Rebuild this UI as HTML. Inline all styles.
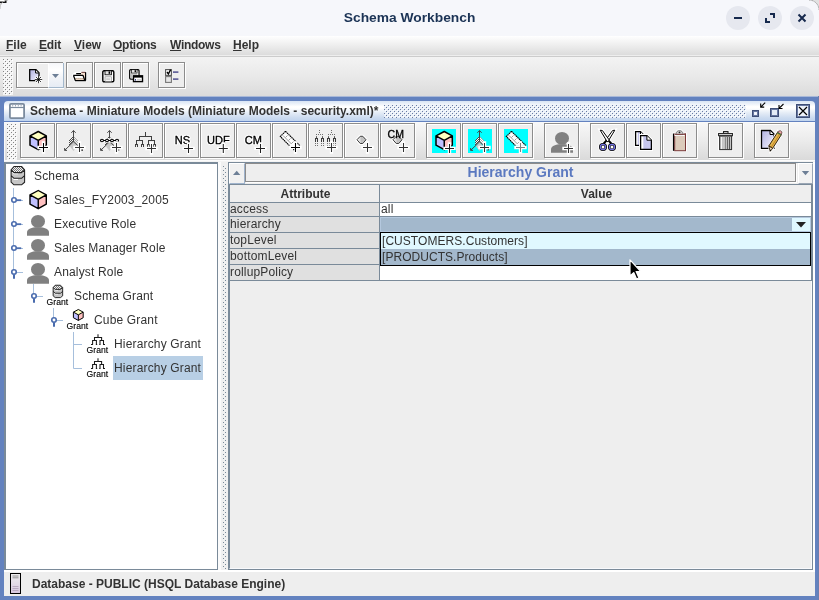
<!DOCTYPE html>
<html><head><meta charset="utf-8"><title>Schema Workbench</title>
<style>
html,body{margin:0;padding:0;}
body{will-change:transform;width:819px;height:600px;overflow:hidden;position:relative;background:#eeeeee;font-family:"Liberation Sans",sans-serif;font-size:12px;color:#333;}
div,svg,span{position:absolute;}
svg{overflow:visible;}
.t{white-space:nowrap;}
.b{font-weight:bold;}
.p{letter-spacing:0.16px;}
#titlebar{left:0;top:0;width:819px;height:36px;background:#f6f7fb;}
#title{left:0;top:0;width:819px;height:36px;line-height:36px;text-align:center;font-weight:bold;font-size:11.9px;color:#1b3355;transform:scaleX(1.16);transform-origin:409px 50%;}
.wbtn{width:24px;height:24px;border-radius:12px;background:#e6e8ef;top:6px;}
#menubar{left:0;top:36px;width:819px;height:20px;background:linear-gradient(#ffffff,#dcdcdc 95%,#eeeeee 95%);border-bottom:1px solid #cccccc;}
.menu{top:36px;height:20px;line-height:19px;font-weight:bold;font-size:12px;color:#333;}
.tbtn{box-sizing:border-box;border:1px solid #8c8c8c;background:#eeeeee;box-shadow:inset 1px 1px 0 #fff,1px 1px 0 #fff;}
</style></head><body>

<div id="titlebar"></div>
<svg style="left:0;top:0" width="819" height="12"><path d="M0 0H8A8 8 0 0 0 0 9Z" fill="#dcdcdc"/><path d="M0 0H5V2H0Z" fill="#fff"/><path d="M0 2.3H5.8V0" fill="none" stroke="#111" stroke-width="1.4"/><path d="M8 0A8 8 0 0 0 0 9" fill="none" stroke="#b0b0b0" stroke-width="0.8"/><path d="M819 0H809A10 10 0 0 1 819 10Z" fill="#e2e2e2"/><path d="M809 0A10 10 0 0 1 819 10" fill="none" stroke="#8a8a8a" stroke-width="0.9" stroke-dasharray="1 0.6"/></svg>
<div id="title">Schema Workbench</div>
<div class="wbtn" style="left:726px"></div>
<div class="wbtn" style="left:758px"></div>
<div class="wbtn" style="left:790px"></div>
<svg style="left:726px;top:6px" width="24" height="24"><path d="M8 12H16" stroke="#16294d" stroke-width="2"/></svg>
<svg style="left:758px;top:6px" width="24" height="24"><path d="M12 8H16V12M8 12V16H12" stroke="#16294d" stroke-width="2" fill="none"/></svg>
<svg style="left:790px;top:6px" width="24" height="24"><path d="M8.5 8.5L15.5 15.5M15.5 8.5L8.5 15.5" stroke="#16294d" stroke-width="2" fill="none"/></svg>
<div id="menubar"></div>
<div class="menu t" style="left:6px;letter-spacing:0px"><u>F</u>ile</div>
<div class="menu t" style="left:39px;letter-spacing:-0.18px"><u>E</u>dit</div>
<div class="menu t" style="left:74px;letter-spacing:0px"><u>V</u>iew</div>
<div class="menu t" style="left:113px;letter-spacing:-0.27px"><u>O</u>ptions</div>
<div class="menu t" style="left:170px;letter-spacing:-0.29px"><u>W</u>indows</div>
<div class="menu t" style="left:233px;letter-spacing:0px"><u>H</u>elp</div>
<div style="left:0;top:57px;width:819px;height:39px;background:linear-gradient(#f3f3f3,#e9e9e9 50%,#dbdbdb)"></div>
<svg style="left:3px;top:59px" width="10" height="36" shape-rendering="crispEdges"><defs><pattern id="bp3_59" width="4" height="4" patternUnits="userSpaceOnUse"><rect width="4" height="4" fill="#f3f3f3"/><rect x="0" y="0" width="1" height="1" fill="#858585"/><rect x="2" y="2" width="1" height="1" fill="#858585"/><rect x="1" y="1" width="1" height="1" fill="#ffffff"/><rect x="3" y="3" width="1" height="1" fill="#ffffff"/></pattern></defs><rect width="10" height="36" fill="url(#bp3_59)"/></svg>
<div class="tbtn" style="left:16px;top:62px;width:47px;height:26px"></div>
<div class="tbtn" style="left:66px;top:62px;width:27px;height:26px"></div>
<div class="tbtn" style="left:94px;top:62px;width:27px;height:26px"></div>
<div class="tbtn" style="left:122px;top:62px;width:27px;height:26px"></div>
<div class="tbtn" style="left:158px;top:62px;width:27px;height:26px"></div>
<div style="left:0;top:96px;width:819px;height:504px;background:#6382bf"></div>
<div style="left:0;top:96px;width:819px;height:1px;background:#a8b8d8"></div>
<div style="left:818px;top:96px;width:1px;height:504px;background:#6a7fae"></div>
<div style="left:4px;top:101px;width:811px;height:20px;border-radius:4px 4px 0 0;background:linear-gradient(#d8e4f4 0%,#ffffff 28%,#ffffff 35%,#e4ecf6 60%,#cddcf0 83%,#c0d4ee 100%)"></div>
<div class="t b" style="left:30px;top:101px;height:20px;line-height:20px;font-size:12px;color:#333">Schema - Miniature Models (Miniature Models - security.xml)*</div>
<div style="left:4px;top:122px;width:811px;height:474px;background:#eeeeee"></div>
<div style="left:4px;top:122px;width:811px;height:38px;background:linear-gradient(#f8f8f8,#ebebeb 50%,#dadada)"></div>
<div style="left:4px;top:122px;width:811px;height:1px;background:#fafafa"></div>
<div style="left:4px;top:122px;width:1px;height:40px;background:#fafafa"></div>
<div style="left:4px;top:160px;width:811px;height:1px;background:#fcfcfc"></div>
<div style="left:4px;top:161px;width:811px;height:1px;background:#f4f4f4"></div>
<div style="left:4px;top:162px;width:1px;height:408px;background:#7a8a99"></div>
<svg style="left:7px;top:124px" width="10" height="36" shape-rendering="crispEdges"><defs><pattern id="bp7_124" width="4" height="4" patternUnits="userSpaceOnUse"><rect width="4" height="4" fill="#f5f5f5"/><rect x="0" y="0" width="1" height="1" fill="#858585"/><rect x="2" y="2" width="1" height="1" fill="#858585"/><rect x="1" y="1" width="1" height="1" fill="#ffffff"/><rect x="3" y="3" width="1" height="1" fill="#ffffff"/></pattern></defs><rect width="10" height="36" fill="url(#bp7_124)"/></svg>
<div class="tbtn" style="left:20px;top:123px;width:35px;height:35px"></div>
<div class="tbtn" style="left:56px;top:123px;width:35px;height:35px"></div>
<div class="tbtn" style="left:92px;top:123px;width:35px;height:35px"></div>
<div class="tbtn" style="left:128px;top:123px;width:35px;height:35px"></div>
<div class="tbtn" style="left:164px;top:123px;width:35px;height:35px"></div>
<div class="tbtn" style="left:200px;top:123px;width:35px;height:35px"></div>
<div class="tbtn" style="left:236px;top:123px;width:35px;height:35px"></div>
<div class="tbtn" style="left:272px;top:123px;width:35px;height:35px"></div>
<div class="tbtn" style="left:308px;top:123px;width:35px;height:35px"></div>
<div class="tbtn" style="left:344px;top:123px;width:35px;height:35px"></div>
<div class="tbtn" style="left:380px;top:123px;width:35px;height:35px"></div>
<div class="tbtn" style="left:426px;top:123px;width:35px;height:35px"></div>
<div class="tbtn" style="left:462px;top:123px;width:35px;height:35px"></div>
<div class="tbtn" style="left:498px;top:123px;width:35px;height:35px"></div>
<div class="tbtn" style="left:544px;top:123px;width:35px;height:35px"></div>
<div class="tbtn" style="left:590px;top:123px;width:35px;height:35px"></div>
<div class="tbtn" style="left:626px;top:123px;width:35px;height:35px"></div>
<div class="tbtn" style="left:662px;top:123px;width:35px;height:35px"></div>
<div class="tbtn" style="left:708px;top:123px;width:35px;height:35px"></div>
<div class="tbtn" style="left:754px;top:123px;width:35px;height:35px"></div>
<div style="left:5px;top:162px;width:213px;height:408px;box-sizing:border-box;border:1px solid #7a8a99;border-top-width:2px;background:#fff"></div>
<div style="left:218px;top:162px;width:10px;height:408px;background:linear-gradient(90deg,#fbfbfb 3px,#f0f0f0 3px)"></div>
<div style="left:228px;top:162px;width:585px;height:408px;box-sizing:border-box;border:1px solid #7a8a99;background:#eeeeee"></div>
<div style="left:4px;top:570px;width:811px;height:2px;background:#fff"></div>
<div style="left:813px;top:162px;width:2px;height:410px;background:#fff"></div>
<div class="t b" style="left:32px;top:572px;height:24px;line-height:25px;font-size:12px;color:#333">Database - PUBLIC (HSQL Database Engine)</div>
<svg width="0" height="0" style="left:0;top:0"><defs><pattern id="hx1" width="2" height="2" patternUnits="userSpaceOnUse"><rect width="1" height="1" fill="#4a4a4a"/><rect x="1" y="1" width="1" height="1" fill="#4a4a4a"/></pattern><pattern id="hx2" width="2" height="2" patternUnits="userSpaceOnUse"><rect width="1" height="1" fill="#a8a8a8"/><rect x="1" y="1" width="1" height="1" fill="#a8a8a8"/></pattern></defs></svg>
<svg width="0" height="0" style="left:0;top:0"><defs><linearGradient id="hexg" x1="0" x2="1" y1="0" y2="0"><stop offset="0.15" stop-color="#f4f4f4"/><stop offset="0.5" stop-color="#c0c0c0"/><stop offset="1" stop-color="#c8c8c8"/></linearGradient><linearGradient id="docg" x1="0" x2="1" y1="0" y2="1"><stop offset="0" stop-color="#b0b0e0"/><stop offset="1" stop-color="#f4f4ff"/></linearGradient><linearGradient id="docg2" x1="0" x2="1" y1="0" y2="0"><stop offset="0" stop-color="#ffffff"/><stop offset="0.2" stop-color="#ffffff"/><stop offset="0.3" stop-color="#c4c4ec"/><stop offset="1" stop-color="#cacaf0"/></linearGradient></defs></svg>
<svg style="left:26px;top:129px" width="24" height="24" viewBox="0 0 24 24" ><path d="M12.25 2.50L20.30 6.90L12.25 11.40L4.00 6.90Z" fill="#ffffc0"/><path d="M4.00 6.90L12.25 11.40L12.25 20.70L4.00 16.20Z" fill="#c0c0ff"/><path d="M20.30 6.90L12.25 11.40L12.25 20.70L20.30 16.20Z" fill="#ffc0c0"/><path d="M12.25 2.50L20.30 6.90L20.30 16.20L12.25 20.70L4.00 16.20L4.00 6.90ZM4.00 6.90L12.25 11.40L20.30 6.90M12.25 11.40L12.25 20.70" fill="none" stroke="#000" stroke-width="1.5" stroke-linejoin="round"/><path d="M13.0 18.5H22.0M17.5 14.0V23.0" stroke="#fff" stroke-width="3.4" stroke-linecap="square" fill="none"/><path d="M13.0 18.5H22.0M17.5 14.0V23.0" stroke="#000" stroke-width="1.05" fill="none"/></svg>
<svg style="left:62px;top:129px" width="24" height="24" viewBox="0 0 24 24" ><path d="M11.5 6.5L7 11V17.5L11.5 13Z" fill="url(#hx1)"/><path d="M11.5 6.5L16 11V17L11.5 13Z" fill="url(#hx2)"/><path d="M11.5 13L8 17.5L11.5 22L15 17.5Z" fill="#c8c8c8"/><path d="M11.5 1.5V12.8M9.3 3.8L11.5 1.6L13.7 3.8M11.5 12.8L2.8 21.2M2.6 19V21.4H5M11.5 12.8L16 17" fill="none" stroke="#404040" stroke-width="0.95"/><path d="M13.0 18.5H22.0M17.5 14.0V23.0" stroke="#fff" stroke-width="3.4" stroke-linecap="square" fill="none"/><path d="M13.0 18.5H22.0M17.5 14.0V23.0" stroke="#333" stroke-width="1.05" fill="none"/><rect x="19.4" y="20.4" width="1.5" height="1.5" fill="#333"/></svg>
<svg style="left:98px;top:129px" width="24" height="24" viewBox="0 0 24 24" ><path d="M11.5 6.5L7 11V17.5L11.5 13Z" fill="url(#hx1)"/><path d="M11.5 6.5L16 11V17L11.5 13Z" fill="url(#hx2)"/><path d="M11.5 13L8 17.5L11.5 22L15 17.5Z" fill="#c8c8c8"/><path d="M11.5 1.5V12.8M9.3 3.8L11.5 1.6L13.7 3.8M11.5 12.8L2.8 21.2M2.6 19V21.4H5M11.5 12.8L16 17" fill="none" stroke="#404040" stroke-width="0.95"/><path d="M3 11.5H20" stroke="#fff" stroke-width="4.2"/><path d="M4 11.5H19" stroke="#000" stroke-width="1"/><ellipse cx="4" cy="11.5" rx="1.5" ry="1.2" fill="#fff" stroke="#000" stroke-width="1.1"/><ellipse cx="9" cy="11.5" rx="1.5" ry="1.2" fill="#fff" stroke="#000" stroke-width="1.1"/><ellipse cx="14" cy="11.5" rx="1.5" ry="1.2" fill="#fff" stroke="#000" stroke-width="1.1"/><ellipse cx="19" cy="11.5" rx="1.5" ry="1.2" fill="#fff" stroke="#000" stroke-width="1.1"/><path d="M14.0 18.5H23.0M18.5 14.0V23.0" stroke="#fff" stroke-width="3.4" stroke-linecap="square" fill="none"/><path d="M14.0 18.5H23.0M18.5 14.0V23.0" stroke="#333" stroke-width="1.05" fill="none"/><rect x="20.3" y="20.3" width="1" height="1.4" fill="#555"/></svg>
<svg style="left:134px;top:129px" width="24" height="24" viewBox="0 0 24 24" ><path d="M11.5 3V7.5M5.5 11.5V7.5H17.5V11.5M2.5 15V11.5H8.5V15M14.5 15V11.5H20.5V15M1.5 18V15.5H3.5V18M7.5 18V15.5H9.5V18M13.5 18V15.5H15.5V18M19.5 18V15.5H21.5V18" fill="none" stroke="#404040" stroke-width="1" shape-rendering="crispEdges"/><path d="M13.0 19.5H22.0M17.5 15.0V24.0" stroke="#fff" stroke-width="3.4" stroke-linecap="square" fill="none"/><path d="M13.0 19.5H22.0M17.5 15.0V24.0" stroke="#333" stroke-width="1.05" fill="none"/></svg>
<svg style="left:170px;top:129px" width="24" height="24" viewBox="0 0 24 24" ><text x="4.7" y="15.3" font-family="Liberation Sans, sans-serif" font-size="11" font-weight="normal" fill="#fff" stroke="#fff" stroke-width="2.4" stroke-linejoin="round">NS</text><text x="4.7" y="15.3" font-family="Liberation Sans, sans-serif" font-size="11" font-weight="normal" fill="#000" stroke="#000" stroke-width="0.35">NS</text><path d="M14.0 19.4H23.0M18.5 14.899999999999999V23.9" stroke="#fff" stroke-width="3.4" stroke-linecap="square" fill="none"/><path d="M14.0 19.4H23.0M18.5 14.899999999999999V23.9" stroke="#222" stroke-width="1.05" fill="none"/></svg>
<svg style="left:206px;top:129px" width="24" height="24" viewBox="0 0 24 24" ><text x="1" y="15.4" font-family="Liberation Sans, sans-serif" font-size="11" font-weight="normal" fill="#fff" stroke="#fff" stroke-width="2.4" stroke-linejoin="round">UDF</text><text x="1" y="15.4" font-family="Liberation Sans, sans-serif" font-size="11" font-weight="normal" fill="#000" stroke="#000" stroke-width="0.35">UDF</text><path d="M12.8 19.4H21.8M17.3 14.899999999999999V23.9" stroke="#fff" stroke-width="3.4" stroke-linecap="square" fill="none"/><path d="M12.8 19.4H21.8M17.3 14.899999999999999V23.9" stroke="#222" stroke-width="1.05" fill="none"/></svg>
<svg style="left:242px;top:129px" width="24" height="24" viewBox="0 0 24 24" ><text x="2.7" y="15.4" font-family="Liberation Sans, sans-serif" font-size="11" font-weight="normal" fill="#fff" stroke="#fff" stroke-width="2.4" stroke-linejoin="round">CM</text><text x="2.7" y="15.4" font-family="Liberation Sans, sans-serif" font-size="11" font-weight="normal" fill="#000" stroke="#000" stroke-width="0.35">CM</text><path d="M14.0 19.4H23.0M18.5 14.899999999999999V23.9" stroke="#fff" stroke-width="3.4" stroke-linecap="square" fill="none"/><path d="M14.0 19.4H23.0M18.5 14.899999999999999V23.9" stroke="#222" stroke-width="1.05" fill="none"/></svg>
<svg style="left:278px;top:129px" width="24" height="24" viewBox="0 0 24 24" ><path d="M7.5 2.3L2.3 7.4L11.6 16.7L16 12.5L21.7 17" fill="none"/><path d="M7.5 2.3L2.3 7.5L11.5 16.7L21.9 16.7Z" fill="#fff"/><path d="M7.5 2.3L2.3 7.5L11.5 16.7M7.5 2.3L21.8 16.6" fill="none" stroke="#000" stroke-width="1.1" stroke-dasharray="1.6 0.5"/><path d="M5 6.5L13.5 15M7.5 8.5L9.5 6.5M10.5 11.5L12.5 9.5M13.5 14.5L15.5 12.5" fill="none" stroke="#909090" stroke-width="0.9"/><path d="M13.0 18.5H22.0M17.5 14.0V23.0" stroke="#fff" stroke-width="3.4" stroke-linecap="square" fill="none"/><path d="M13.0 18.5H22.0M17.5 14.0V23.0" stroke="#000" stroke-width="1.05" fill="none"/><rect x="15" y="20" width="1.2" height="1.2" fill="#222"/></svg>
<svg style="left:314px;top:129px" width="24" height="24" viewBox="0 0 24 24" ><g shape-rendering="crispEdges"><rect x="5" y="1" width="1" height="1" fill="#707070"/><rect x="5" y="3" width="1" height="1" fill="#707070"/><rect x="2" y="5" width="1" height="1" fill="#707070"/><rect x="4" y="5" width="1" height="1" fill="#707070"/><rect x="6" y="5" width="1" height="1" fill="#707070"/><rect x="8" y="5" width="1" height="1" fill="#707070"/><rect x="2" y="7" width="1" height="1" fill="#707070"/><rect x="8" y="7" width="1" height="1" fill="#707070"/><rect x="2" y="8" width="1" height="1" fill="#555"/><rect x="1" y="9" width="3" height="1" fill="#3a3a3a"/><rect x="1" y="10" width="1" height="3" fill="#3a3a3a"/><rect x="3" y="10" width="1" height="3" fill="#3a3a3a"/><rect x="1" y="14" width="1" height="1" fill="#707070"/><rect x="3" y="14" width="1" height="1" fill="#707070"/><rect x="1" y="16" width="1" height="1" fill="#707070"/><rect x="3" y="16" width="1" height="1" fill="#707070"/><rect x="8" y="8" width="1" height="1" fill="#555"/><rect x="7" y="9" width="3" height="1" fill="#3a3a3a"/><rect x="7" y="10" width="1" height="3" fill="#3a3a3a"/><rect x="9" y="10" width="1" height="3" fill="#3a3a3a"/><rect x="7" y="14" width="1" height="1" fill="#707070"/><rect x="9" y="14" width="1" height="1" fill="#707070"/><rect x="7" y="16" width="1" height="1" fill="#707070"/><rect x="9" y="16" width="1" height="1" fill="#707070"/><rect x="17" y="1" width="1" height="1" fill="#707070"/><rect x="17" y="3" width="1" height="1" fill="#707070"/><rect x="14" y="5" width="1" height="1" fill="#707070"/><rect x="16" y="5" width="1" height="1" fill="#707070"/><rect x="18" y="5" width="1" height="1" fill="#707070"/><rect x="20" y="5" width="1" height="1" fill="#707070"/><rect x="14" y="7" width="1" height="1" fill="#707070"/><rect x="20" y="7" width="1" height="1" fill="#707070"/><rect x="14" y="8" width="1" height="1" fill="#555"/><rect x="13" y="9" width="3" height="1" fill="#3a3a3a"/><rect x="13" y="10" width="1" height="3" fill="#3a3a3a"/><rect x="15" y="10" width="1" height="3" fill="#3a3a3a"/><rect x="13" y="14" width="1" height="1" fill="#707070"/><rect x="15" y="14" width="1" height="1" fill="#707070"/><rect x="13" y="16" width="1" height="1" fill="#707070"/><rect x="15" y="16" width="1" height="1" fill="#707070"/><rect x="20" y="8" width="1" height="1" fill="#555"/><rect x="19" y="9" width="3" height="1" fill="#3a3a3a"/><rect x="19" y="10" width="1" height="3" fill="#3a3a3a"/><rect x="21" y="10" width="1" height="3" fill="#3a3a3a"/><rect x="19" y="14" width="1" height="1" fill="#707070"/><rect x="21" y="14" width="1" height="1" fill="#707070"/><rect x="19" y="16" width="1" height="1" fill="#707070"/><rect x="21" y="16" width="1" height="1" fill="#707070"/></g><path d="M13.0 18.5H22.0M17.5 14.0V23.0" stroke="#fff" stroke-width="3.4" stroke-linecap="square" fill="none"/><path d="M13.0 18.5H22.0M17.5 14.0V23.0" stroke="#333" stroke-width="1.05" fill="none"/></svg>
<svg style="left:350px;top:129px" width="24" height="24" viewBox="0 0 24 24" ><path d="M7 10.75L10.25 7.25L12.75 7.25L16 10.75L12.75 14.5L10.25 14.5Z" fill="none" stroke="#fff" stroke-width="3.2" stroke-linejoin="round"/><path d="M7 10.75L10.25 7.25L12.75 7.25L16 10.75L12.75 14.5L10.25 14.5Z" fill="url(#hexg)" stroke="#333" stroke-width="0.95" stroke-linejoin="round"/><path d="M13.0 18.5H22.0M17.5 14.0V23.0" stroke="#fff" stroke-width="3.4" stroke-linecap="square" fill="none"/><path d="M13.0 18.5H22.0M17.5 14.0V23.0" stroke="#333" stroke-width="1.05" fill="none"/></svg>
<svg style="left:386px;top:129px" width="24" height="24" viewBox="0 0 24 24" ><path d="M7 10.75L10.25 7.25L12.75 7.25L16 10.75L12.75 14.5L10.25 14.5Z" fill="none" stroke="#fff" stroke-width="3.2" stroke-linejoin="round"/><path d="M7 10.75L10.25 7.25L12.75 7.25L16 10.75L12.75 14.5L10.25 14.5Z" fill="url(#hexg)" stroke="#333" stroke-width="0.95" stroke-linejoin="round"/><text x="1.6" y="8.7" font-family="Liberation Sans, sans-serif" font-size="10.5" font-weight="normal" fill="#000" stroke="#000" stroke-width="0.3">CM</text><path d="M13.0 18.5H22.0M17.5 14.0V23.0" stroke="#fff" stroke-width="3.4" stroke-linecap="square" fill="none"/><path d="M13.0 18.5H22.0M17.5 14.0V23.0" stroke="#333" stroke-width="1.05" fill="none"/></svg>
<svg style="left:432px;top:129px" width="24" height="24" viewBox="0 0 24 24" ><rect x="-0.5" y="-0.5" width="25" height="25" fill="#ffe6e6"/><rect width="24" height="24" fill="#00ffff"/><path d="M12.25 2.50L20.30 6.90L12.25 11.40L4.00 6.90Z" fill="#ffffc0"/><path d="M4.00 6.90L12.25 11.40L12.25 20.70L4.00 16.20Z" fill="#c0c0ff"/><path d="M20.30 6.90L12.25 11.40L12.25 20.70L20.30 16.20Z" fill="#ffc0c0"/><path d="M12.25 2.50L20.30 6.90L20.30 16.20L12.25 20.70L4.00 16.20L4.00 6.90ZM4.00 6.90L12.25 11.40L20.30 6.90M12.25 11.40L12.25 20.70" fill="none" stroke="#000" stroke-width="1.5" stroke-linejoin="round"/><path d="M13.0 19.4H22.0M17.5 14.899999999999999V23.9" stroke="#fff" stroke-width="3.4" stroke-linecap="square" fill="none"/><path d="M13.0 19.4H22.0M17.5 14.899999999999999V23.9" stroke="#222" stroke-width="1.05" fill="none"/></svg>
<svg style="left:468px;top:129px" width="24" height="24" viewBox="0 0 24 24" ><rect x="-0.5" y="-0.5" width="25" height="25" fill="#ffe6e6"/><rect width="24" height="24" fill="#00ffff"/><path d="M11.5 7.5L7.5 11.5V17L11.5 13L15.5 16.5V11.5Z" fill="#fff"/><path d="M11.5 6.5L7 11V17.5L11.5 13Z" fill="url(#hx1)"/><path d="M11.5 6.5L16 11V17L11.5 13Z" fill="url(#hx2)"/><path d="M11.5 13L8 17.5L11.5 22L15 17.5Z" fill="#c8c8c8"/><path d="M11.5 1.5V12.8M9.3 3.8L11.5 1.6L13.7 3.8M11.5 12.8L2.8 21.2M2.6 19V21.4H5M11.5 12.8L15 16" fill="none" stroke="#404040" stroke-width="0.95"/><path d="M12.0 18.5H21.0M16.5 14.0V23.0" stroke="#fff" stroke-width="3.4" stroke-linecap="square" fill="none"/><path d="M12.0 18.5H21.0M16.5 14.0V23.0" stroke="#333" stroke-width="1.05" fill="none"/><path d="M18.5 21.5L21 19.5V21.5Z" fill="#8a5050"/></svg>
<svg style="left:504px;top:129px" width="24" height="24" viewBox="0 0 24 24" ><rect x="-0.5" y="-0.5" width="25" height="25" fill="#ffe6e6"/><rect width="24" height="24" fill="#00ffff"/><path d="M7.5 2.3L2.3 7.4L11.6 16.7L16 12.5L21.7 17" fill="none"/><path d="M7.5 2.3L2.3 7.5L11.5 16.7L21.9 16.7Z" fill="#fff"/><path d="M7.5 2.3L2.3 7.5L11.5 16.7M7.5 2.3L21.8 16.6" fill="none" stroke="#000" stroke-width="1.1" stroke-dasharray="1.6 0.5"/><path d="M5 6.5L13.5 15M7.5 8.5L9.5 6.5M10.5 11.5L12.5 9.5M13.5 14.5L15.5 12.5" fill="none" stroke="#909090" stroke-width="0.9"/><path d="M12.0 18.5H21.0M16.5 14.0V23.0" stroke="#fff" stroke-width="3.4" stroke-linecap="square" fill="none"/><path d="M12.0 18.5H21.0M16.5 14.0V23.0" stroke="#808080" stroke-width="1.05" fill="none"/></svg>
<svg style="left:550px;top:129px" width="24" height="24" viewBox="0 0 24 24" ><ellipse cx="12" cy="9.4" rx="7" ry="6.4" fill="#808080"/><path d="M1 23.8V20.5C1 17.5 4 16.2 9 15.3H15C20 16.2 23 17.5 23 20.5V23.8Z" fill="#808080"/><path d="M14.0 19.5H23.0M18.5 15.0V24.0" stroke="#fff" stroke-width="3.4" stroke-linecap="square" fill="none"/><path d="M14.0 19.5H23.0M18.5 15.0V24.0" stroke="#333" stroke-width="1.05" fill="none"/></svg>
<svg style="left:596px;top:129px" width="24" height="24" viewBox="0 0 24 24" ><path d="M4.2 1.2L6.4 1.5L13.4 11.2L11.2 12.8Z" fill="#fff" stroke="#fff" stroke-width="3"/><path d="M18.8 1.2L16.6 1.5L9.6 11.2L11.8 12.8Z" fill="#fff" stroke="#fff" stroke-width="3"/><circle cx="7" cy="18" r="4.9" fill="#fff"/><circle cx="16" cy="18" r="4.9" fill="#fff"/><path d="M12.6 11.6L15.4 14.6M10.4 11.6L7.6 14.6" stroke="#000" stroke-width="2.1"/><path d="M18.8 1.2L16.6 1.5L9.6 11.2L11.8 12.8Z" fill="#fff" stroke="#000" stroke-width="1" stroke-linejoin="round"/><path d="M4.2 1.2L6.4 1.5L13.4 11.2L11.2 12.8Z" fill="#fff" stroke="#000" stroke-width="1" stroke-linejoin="round"/><circle cx="7" cy="18" r="4" fill="#000"/><circle cx="7" cy="18" r="3.2" fill="#7474e6"/><circle cx="7" cy="18" r="2.1" fill="#000"/><circle cx="7" cy="18" r="1.5" fill="#fff"/><circle cx="16" cy="18" r="4" fill="#000"/><circle cx="16" cy="18" r="3.2" fill="#7474e6"/><circle cx="16" cy="18" r="2.1" fill="#000"/><circle cx="16" cy="18" r="1.5" fill="#fff"/></svg>
<svg style="left:632px;top:129px" width="24" height="24" viewBox="0 0 24 24" ><path d="M3.6 2.7H8.5L12 6.2V16.3H3.6Z" fill="#fff" stroke="#fff" stroke-width="3.2"/><path d="M3.6 2.7H8.5L12 6.2V16.3H3.6Z" fill="url(#docg2)" stroke="#000" stroke-width="1.3"/><path d="M8.5 2.7V6.2H12" fill="#fff" stroke="#000" stroke-width="1"/><path d="M8.6 6.7H14.899999999999999L19.4 11.2V20.3H8.6Z" fill="#fff" stroke="#fff" stroke-width="3.2"/><path d="M8.6 6.7H14.899999999999999L19.4 11.2V20.3H8.6Z" fill="url(#docg2)" stroke="#000" stroke-width="1.3"/><path d="M14.899999999999999 6.7V11.2H19.4" fill="#fff" stroke="#000" stroke-width="1"/></svg>
<svg style="left:668px;top:129px" width="24" height="24" viewBox="0 0 24 24" ><rect x="4.3" y="3.5" width="14.6" height="19" fill="#fff"/><rect x="6.7" y="4.8" width="10.8" height="16.9" fill="#dccbbb" stroke="#7a3838" stroke-width="1"/><path d="M5.5 4.5V21.8" stroke="#000" stroke-width="1.2"/><path d="M7.8 5.6C7.8 0.2 15.2 0.2 15.2 5.6Z" fill="#c8c8c8" stroke="#fff" stroke-width="2.6"/><path d="M7.8 5.6C7.8 0.2 15.2 0.2 15.2 5.6Z" fill="#d0d0d0" stroke="#666" stroke-width="0.8"/><circle cx="11.5" cy="3.3" r="0.9" fill="#222"/><path d="M6.7 5.3H17.5" stroke="#7a3838" stroke-width="1"/></svg>
<svg style="left:714px;top:129px" width="24" height="24" viewBox="0 0 24 24" ><path d="M9.5 2.5H14V4.5H18.5V6.7H17.6V20.6H5.6V6.7H4.5V4.5H9.5Z" fill="#fff" stroke="#fff" stroke-width="3" stroke-linejoin="round"/><rect x="9.5" y="2.5" width="4.5" height="2" fill="#ddd" stroke="#222" stroke-width="1.1"/><rect x="4.5" y="4.5" width="14" height="2.2" fill="#d8d8d8" stroke="#2a2a2a" stroke-width="1.1"/><rect x="5.6" y="7" width="12" height="13.6" fill="#c4c4c4" stroke="#333" stroke-width="1.1"/><rect x="7.0" y="8" width="1" height="12" fill="#f4f4f4"/><rect x="9.0" y="8" width="1" height="12" fill="#c8c8c8"/><rect x="11.0" y="8" width="1" height="12" fill="#8a8a8a"/><rect x="13.0" y="8" width="1" height="12" fill="#666"/><rect x="15.0" y="8" width="1" height="12" fill="#555"/></svg>
<svg style="left:760px;top:129px" width="24" height="24" viewBox="0 0 24 24" ><path d="M1.5 1.5H10.5L14 5V19.3H1.5Z" fill="#fff" stroke="#fff" stroke-width="3"/><path d="M1.5 1.5H10.5L14 5V19.3H1.5Z" fill="url(#docg)" stroke="#000" stroke-width="1.3"/><path d="M10 2V5.5H13.5" fill="#fff" stroke="#000" stroke-width="1"/><path d="M18 2L22 4.5L12.5 19.5L10.2 22.3L9.2 17.2Z" fill="#fff" stroke="#fff" stroke-width="2.4"/><path d="M17.6 3.2L21.4 5.6L12.6 19.4L8.8 17Z" fill="#e4b850" stroke="#201000" stroke-width="0.9"/><path d="M17.6 3.2L18.4 2.2Q20.5 0.8 22 3.2L21.4 5.6Z" fill="#f0a8a8" stroke="#503030" stroke-width="0.8"/><path d="M16.9 4.3L20.7 6.7L21.4 5.6L17.6 3.2Z" fill="#4a7a3a"/><path d="M8.8 17L12.6 19.4L10.2 22.3Z" fill="#f4e0c0" stroke="#201000" stroke-width="0.8"/><path d="M10.2 22.3L9.9 20.4L11.3 21.2Z" fill="#000"/><path d="M19.6 5.2L11 18.4" stroke="#c08020" stroke-width="0.9"/></svg>
<div style="left:48px;top:63px;width:16px;height:25px;background:linear-gradient(#f6f7fa,#ffffff 30%,#f2f4f8 60%,#e6ecf4);border-left:1px solid #fff;border-right:1px solid #a3b8cc;border-bottom:1px solid #a3b8cc;box-sizing:border-box"></div>
<svg style="left:49px;top:62px" width="15" height="27" viewBox="0 0 15 27" ><path d="M3 12H10L6.5 16Z" fill="#6d7f96"/></svg>
<svg style="left:29px;top:69px" width="14" height="15" viewBox="0 0 14 15" ><path d="M0.7 0.7H7L10 3.7V11.7H0.7Z" fill="url(#docg)" stroke="#000" stroke-width="1.3"/><path d="M6.6 1V4H9.6" fill="#fff" stroke="#000" stroke-width="1"/><circle cx="9.5" cy="10.5" r="3.6" fill="#fff" opacity="0.85"/><path d="M9.5 6.8V14.2M5.8 10.5H13.2M7 8L12 13M12 8L7 13" stroke="#000" stroke-width="0.75"/></svg>
<svg style="left:72px;top:71px" width="16" height="12" viewBox="0 0 16 12" ><path d="M1.2 4.3L3.2 2.4H9L9.6 1.2H13.7V9.6H3.2Z" fill="#fff" stroke="#fff" stroke-width="2.6" stroke-linejoin="round"/><path d="M9.5 1.2H13.6V9.5H12.6L11 4.3H8.6Z" fill="#f8e2d2"/><path d="M1.4 4.3H11L12.8 9.5H3.2Z" fill="#fff"/><path d="M2.8 7H11.9L12.7 9.3H3.4Z" fill="#e8d4c0"/><path d="M3.6 7.4H11.4" stroke="#a09080" stroke-width="1" stroke-dasharray="1 1"/><path d="M9.4 1.3H13.6" stroke="#5a2a2a" stroke-width="1"/><path d="M13.6 1.2V9.6M4.2 2.5H9M1.2 4.3H11M1.5 4.5L3.3 9.5M3 9.5H13.9M11 4.3L12.7 9.2" fill="none" stroke="#000" stroke-width="1.25"/></svg>
<svg style="left:101.5px;top:69.5px" width="14" height="14" viewBox="0 0 14 14" ><g transform="translate(0 0) scale(1.0)"><rect x="0.8" y="0.8" width="11" height="11" rx="1.2" fill="#fff" stroke="#000" stroke-width="1.4"/><rect x="3" y="0.8" width="6.5" height="4" fill="#e4e4e4" stroke="#000" stroke-width="0.8"/><rect x="6.6" y="1.4" width="1.6" height="2.4" fill="#000"/><rect x="3" y="6.8" width="6.5" height="4.6" fill="#f4f4f4" stroke="#888" stroke-width="0.6"/><rect x="4.2" y="8.4" width="4" height="1.4" fill="#c8c8c8"/></g></svg>
<svg style="left:128.5px;top:69px" width="15" height="14" viewBox="0 0 15 14" ><g transform="translate(0 0) scale(0.85)"><rect x="0.8" y="0.8" width="11" height="11" rx="1.2" fill="#fff" stroke="#000" stroke-width="1.4"/><rect x="3" y="0.8" width="6.5" height="4" fill="#e4e4e4" stroke="#000" stroke-width="0.8"/><rect x="6.6" y="1.4" width="1.6" height="2.4" fill="#000"/><rect x="3" y="6.8" width="6.5" height="4.6" fill="#f4f4f4" stroke="#888" stroke-width="0.6"/><rect x="4.2" y="8.4" width="4" height="1.4" fill="#c8c8c8"/></g><rect x="4.5" y="6.8" width="9" height="5.8" fill="#fff" stroke="#000" stroke-width="1.4"/><rect x="5" y="7" width="8" height="1.6" fill="#000"/><rect x="6" y="10" width="1" height="1.6" fill="#303080"/><rect x="8" y="10.2" width="4" height="1.2" fill="#c8c8c8"/></svg>
<svg style="left:164.5px;top:68.5px" width="15" height="15" viewBox="0 0 15 15" ><rect x="0.6" y="0.6" width="5.8" height="5.8" fill="#fff" stroke="#555" stroke-width="1.1"/><rect x="0.6" y="7.6" width="5.8" height="5.8" fill="#e8e8e8" stroke="#777" stroke-width="1.1"/><path d="M2 3L3.4 5L5.6 0.6" fill="none" stroke="#000" stroke-width="1.4"/><path d="M8 3.2H13.4M8 10.2H13.4" stroke="#66669c" stroke-width="1.8"/></svg>
<svg style="left:0px;top:0px" width="230" height="600" viewBox="0 0 230 600" style="left:0;top:0"><g fill="none" stroke-width="1"><path d="M13.5 188V272M33.5 284V296M53.5 308V320M73.5 332V368.5H82M73.5 344.5H82M17 200.5H23M17 224.5H23M17 248.5H23M17 272.5H23M37 296.5H43M57 320.5H63" stroke="#a6bfdc"/></g><circle cx="14" cy="200" r="2.25" fill="#fff" stroke="#4a6cae" stroke-width="1.6"/><path d="M16.6 200.2H21.2" stroke="#4a6cae" stroke-width="1.8"/><circle cx="14" cy="224" r="2.25" fill="#fff" stroke="#4a6cae" stroke-width="1.6"/><path d="M16.6 224.2H21.2" stroke="#4a6cae" stroke-width="1.8"/><circle cx="14" cy="248" r="2.25" fill="#fff" stroke="#4a6cae" stroke-width="1.6"/><path d="M16.6 248.2H21.2" stroke="#4a6cae" stroke-width="1.8"/><circle cx="14" cy="272" r="2.25" fill="#fff" stroke="#4a6cae" stroke-width="1.6"/><path d="M14 274.6V278.7" stroke="#4a6cae" stroke-width="2"/><circle cx="34" cy="296" r="2.25" fill="#fff" stroke="#4a6cae" stroke-width="1.6"/><path d="M34 298.6V302.7" stroke="#4a6cae" stroke-width="2"/><circle cx="54" cy="320" r="2.25" fill="#fff" stroke="#4a6cae" stroke-width="1.6"/><path d="M54 322.6V326.7" stroke="#4a6cae" stroke-width="2"/></svg>
<svg width="0" height="0" style="left:0;top:0"><defs><pattern id="cylh" width="2" height="2" patternUnits="userSpaceOnUse"><rect width="2" height="2" fill="#f0f0f0"/><rect width="1" height="1" fill="#777"/><rect x="1" y="1" width="1" height="1" fill="#777"/></pattern></defs></svg>
<svg style="left:6px;top:164px" width="24" height="24" viewBox="0 0 24 24" ><path d="M8.00 2.47L15.50 2.47L18.60 5.92L18.60 18.23L15.50 20.79L8.00 20.79L5.10 18.23L5.10 5.92Z" fill="#c6c6c6"/><path d="M8.00 2.47L15.50 2.47L18.60 5.92L15.50 8.63L8.00 8.63L5.10 5.92Z" fill="url(#cylh)"/><path d="M5.90 7.59L8.20 9.66L12.00 9.66M5.90 13.30L8.20 15.37L12.00 15.37" fill="none" stroke="#fff" stroke-width="1.05"/><path d="M8.00 2.47L15.50 2.47L18.60 5.92L18.60 18.23L15.50 20.79L8.00 20.79L5.10 18.23L5.10 5.92ZM5.10 5.92L8.00 8.63L15.50 8.63L18.60 5.92M5.10 11.58L8.00 14.29L15.50 14.29L18.60 11.58" fill="none" stroke="#222" stroke-width="1.05" stroke-linejoin="round"/></svg>
<div class="t p" style="left:34px;top:164px;height:24px;line-height:24px;font-size:12px;color:#333">Schema</div>
<svg style="left:26px;top:188px" width="24" height="24" viewBox="0 0 24 24" ><path d="M12.25 2.50L20.30 6.90L12.25 11.40L4.00 6.90Z" fill="#ffffc0"/><path d="M4.00 6.90L12.25 11.40L12.25 20.70L4.00 16.20Z" fill="#c0c0ff"/><path d="M20.30 6.90L12.25 11.40L12.25 20.70L20.30 16.20Z" fill="#ffc0c0"/><path d="M12.25 2.50L20.30 6.90L20.30 16.20L12.25 20.70L4.00 16.20L4.00 6.90ZM4.00 6.90L12.25 11.40L20.30 6.90M12.25 11.40L12.25 20.70" fill="none" stroke="#000" stroke-width="1.4" stroke-linejoin="round"/></svg>
<div class="t p" style="left:54px;top:188px;height:24px;line-height:24px;font-size:12px;color:#333">Sales_FY2003_2005</div>
<svg style="left:26px;top:212px" width="24" height="24" viewBox="0 0 24 24" ><ellipse cx="12" cy="9.4" rx="7" ry="6.4" fill="#808080"/><path d="M1 23.8V20.5C1 17.5 4 16.2 9 15.3H15C20 16.2 23 17.5 23 20.5V23.8Z" fill="#808080"/></svg>
<div class="t p" style="left:54px;top:212px;height:24px;line-height:24px;font-size:12px;color:#333">Executive Role</div>
<svg style="left:26px;top:236px" width="24" height="24" viewBox="0 0 24 24" ><ellipse cx="12" cy="9.4" rx="7" ry="6.4" fill="#808080"/><path d="M1 23.8V20.5C1 17.5 4 16.2 9 15.3H15C20 16.2 23 17.5 23 20.5V23.8Z" fill="#808080"/></svg>
<div class="t p" style="left:54px;top:236px;height:24px;line-height:24px;font-size:12px;color:#333">Sales Manager Role</div>
<svg style="left:26px;top:260px" width="24" height="24" viewBox="0 0 24 24" ><ellipse cx="12" cy="9.4" rx="7" ry="6.4" fill="#808080"/><path d="M1 23.8V20.5C1 17.5 4 16.2 9 15.3H15C20 16.2 23 17.5 23 20.5V23.8Z" fill="#808080"/></svg>
<div class="t p" style="left:54px;top:260px;height:24px;line-height:24px;font-size:12px;color:#333">Analyst Role</div>
<svg style="left:46px;top:284px" width="24" height="24" viewBox="0 0 24 24" ><path d="M9.19 1.23L14.48 1.23L16.66 3.56L16.66 11.87L14.48 13.60L9.19 13.60L7.15 11.87L7.15 3.56Z" fill="#c6c6c6"/><path d="M9.19 1.23L14.48 1.23L16.66 3.56L14.48 5.39L9.19 5.39L7.15 3.56Z" fill="url(#cylh)"/><path d="M7.71 4.69L9.33 6.08L12.01 6.08M7.71 8.54L9.33 9.94L12.01 9.94" fill="none" stroke="#fff" stroke-width="0.95"/><path d="M9.19 1.23L14.48 1.23L16.66 3.56L16.66 11.87L14.48 13.60L9.19 13.60L7.15 11.87L7.15 3.56ZM7.15 3.56L9.19 5.39L14.48 5.39L16.66 3.56M7.15 7.38L9.19 9.21L14.48 9.21L16.66 7.38" fill="none" stroke="#222" stroke-width="0.95" stroke-linejoin="round"/><text x="0.6" y="20.5" font-family="Liberation Sans, sans-serif" font-size="8.6" font-weight="normal" fill="#000" stroke="#000" stroke-width="0.12">Grant</text></svg>
<div class="t p" style="left:74px;top:284px;height:24px;line-height:24px;font-size:12px;color:#333">Schema Grant</div>
<svg style="left:66px;top:308px" width="24" height="24" viewBox="0 0 24 24" ><path d="M12.35 1.50L17.18 4.14L12.35 6.84L7.40 4.14Z" fill="#ffffc0"/><path d="M7.40 4.14L12.35 6.84L12.35 12.42L7.40 9.72Z" fill="#c0c0ff"/><path d="M17.18 4.14L12.35 6.84L12.35 12.42L17.18 9.72Z" fill="#ffc0c0"/><path d="M12.35 1.50L17.18 4.14L17.18 9.72L12.35 12.42L7.40 9.72L7.40 4.14ZM7.40 4.14L12.35 6.84L17.18 4.14M12.35 6.84L12.35 12.42" fill="none" stroke="#000" stroke-width="1.0" stroke-linejoin="round"/><text x="0.6" y="20.5" font-family="Liberation Sans, sans-serif" font-size="8.6" font-weight="normal" fill="#000" stroke="#000" stroke-width="0.12">Grant</text></svg>
<div class="t p" style="left:94px;top:308px;height:24px;line-height:24px;font-size:12px;color:#333">Cube Grant</div>
<svg style="left:86px;top:332px" width="24" height="24" viewBox="0 0 24 24" ><path d="M12 2.2V5.5M8.5 8.5V5.5H15.6V8.5M6.6 12.5V8.5H10.4V12.5M14 12.5V8.5H17.5V12.5M5 12.5H7M9.8 12.5H11.2M13.2 12.5H14.6M17 12.5H19" fill="none" stroke="#1a1a1a" stroke-width="1.05"/><text x="0.6" y="20.5" font-family="Liberation Sans, sans-serif" font-size="8.6" font-weight="normal" fill="#000" stroke="#000" stroke-width="0.12">Grant</text></svg>
<div class="t p" style="left:114px;top:332px;height:24px;line-height:24px;font-size:12px;color:#333">Hierarchy Grant</div>
<svg style="left:86px;top:356px" width="24" height="24" viewBox="0 0 24 24" ><path d="M12 2.2V5.5M8.5 8.5V5.5H15.6V8.5M6.6 12.5V8.5H10.4V12.5M14 12.5V8.5H17.5V12.5M5 12.5H7M9.8 12.5H11.2M13.2 12.5H14.6M17 12.5H19" fill="none" stroke="#1a1a1a" stroke-width="1.05"/><text x="0.6" y="20.5" font-family="Liberation Sans, sans-serif" font-size="8.6" font-weight="normal" fill="#000" stroke="#000" stroke-width="0.12">Grant</text></svg>
<div style="left:113px;top:356px;width:90px;height:24px;background:#b8cfe5"></div>
<div class="t p" style="left:114px;top:356px;height:24px;line-height:24px;font-size:12px;color:#333">Hierarchy Grant</div>
<svg style="left:223px;top:166px" width="4" height="402" viewBox="0 0 4 402" shape-rendering="crispEdges"><defs><pattern id="dvp" width="4" height="4" patternUnits="userSpaceOnUse"><rect x="0" y="0" width="1" height="1" fill="#7a8a99"/><rect x="2" y="2" width="1" height="1" fill="#7a8a99"/></pattern></defs><rect x="0" y="0" width="4" height="404" fill="url(#dvp)"/></svg>
<div style="left:229px;top:163px;width:16px;height:21px;box-sizing:border-box;background:#f1f1f1;border-left:1px solid #fff;border-top:1px solid #fff;border-right:1px solid #9fb3cc;border-bottom:1px solid #9fb3cc"></div>
<svg style="left:229px;top:163px" width="16" height="21" viewBox="0 0 16 21" ><path d="M4 12H11.4L7.7 7.8Z" fill="#6d7f96"/></svg>
<div style="left:245px;top:163px;width:551px;height:19px;box-sizing:border-box;border:1px solid #8c8c8c;background:#eeeeee;box-shadow:1px 1px 0 #fff"></div>
<div class="t b" style="left:245px;top:163px;width:551px;height:19px;line-height:19px;text-align:center;font-size:14px;color:#5b79c0">Hierarchy Grant</div>
<div style="left:798px;top:163px;width:15px;height:21px;box-sizing:border-box;background:#f2f2f2;border-left:1px solid #fff;border-top:1px solid #fff;border-right:1px solid #9aa6b4;border-bottom:1px solid #9aa6b4"></div>
<svg style="left:798px;top:163px" width="15" height="21" viewBox="0 0 15 21" ><path d="M3.8 8H11.2L7.5 12.2Z" fill="#6d7f96"/></svg>
<div style="left:229px;top:184px;width:583px;height:385px;box-sizing:border-box;border:1px solid #7a8a99;border-right-color:#f8f9fc;border-bottom-color:#f8f9fc;background:#eeeeee"></div>
<div style="left:811px;top:184px;width:1px;height:97px;background:#7a8a99"></div>
<div style="left:230px;top:185px;width:581px;height:17px;background:#eeeeee;border-bottom:1px solid #7a8a99"></div>
<div style="left:379px;top:185px;width:1px;height:96px;background:#7a8a99"></div>
<div class="t b" style="left:231px;top:185px;width:149px;height:17px;line-height:19px;text-align:center;font-size:12px;color:#333">Attribute</div>
<div class="t b" style="left:381px;top:185px;width:431px;height:17px;line-height:19px;text-align:center;font-size:12px;color:#333">Value</div>
<div style="left:230px;top:203px;width:149px;height:13px;background:#e0e0e0"></div>
<div style="left:380px;top:203px;width:431px;height:13px;background:#ffffff"></div>
<div style="left:230px;top:216px;width:581px;height:1px;background:#7a8a99"></div>
<div class="t p" style="left:230px;top:201px;height:16px;line-height:16px;font-size:12px;color:#333">access</div>
<div style="left:230px;top:217px;width:149px;height:15px;background:#e0e0e0"></div>
<div style="left:380px;top:217px;width:431px;height:15px;background:#ffffff"></div>
<div style="left:230px;top:232px;width:581px;height:1px;background:#7a8a99"></div>
<div class="t p" style="left:230px;top:216px;height:16px;line-height:16px;font-size:12px;color:#333">hierarchy</div>
<div style="left:230px;top:233px;width:149px;height:15px;background:#e0e0e0"></div>
<div style="left:380px;top:233px;width:431px;height:15px;background:#ffffff"></div>
<div style="left:230px;top:248px;width:581px;height:1px;background:#7a8a99"></div>
<div class="t p" style="left:230px;top:232px;height:16px;line-height:16px;font-size:12px;color:#333">topLevel</div>
<div style="left:230px;top:249px;width:149px;height:15px;background:#e0e0e0"></div>
<div style="left:380px;top:249px;width:431px;height:15px;background:#ffffff"></div>
<div style="left:230px;top:264px;width:581px;height:1px;background:#7a8a99"></div>
<div class="t p" style="left:230px;top:248px;height:16px;line-height:16px;font-size:12px;color:#333">bottomLevel</div>
<div style="left:230px;top:265px;width:149px;height:15px;background:#e0e0e0"></div>
<div style="left:380px;top:265px;width:431px;height:15px;background:#ffffff"></div>
<div style="left:230px;top:280px;width:581px;height:1px;background:#7a8a99"></div>
<div class="t p" style="left:230px;top:264px;height:16px;line-height:16px;font-size:12px;color:#333">rollupPolicy</div>
<div style="left:379px;top:185px;width:1px;height:96px;background:#7a8a99"></div>
<div class="t p" style="left:381px;top:201px;height:16px;line-height:16px;font-size:12px;color:#333">all</div>
<div style="left:380px;top:217px;width:431px;height:15px;background:#a3b8cc;box-sizing:border-box;border:1px solid #b4c8de"></div>
<div style="left:792px;top:218px;width:18px;height:13px;background:#e0f8ff"></div>
<svg style="left:792px;top:218px" width="18" height="13" viewBox="0 0 18 13" ><path d="M4 4H14L9 9.5Z" fill="#222"/></svg>
<div style="left:380px;top:232px;width:431px;height:34px;box-sizing:border-box;border:1px solid #000;background:#e0f8ff"></div>
<div style="left:381px;top:249px;width:429px;height:16px;background:#a3b8cc"></div>
<div class="t" style="letter-spacing:0.05px;left:382px;top:233px;height:16px;line-height:16px;font-size:12px;color:#333">[CUSTOMERS.Customers]</div>
<div class="t" style="letter-spacing:0.05px;left:382px;top:249px;height:16px;line-height:16px;font-size:12px;color:#333">[PRODUCTS.Products]</div>
<svg style="left:629px;top:259px" width="14" height="22" viewBox="0 0 14 22" ><path d="M1 0.8V17L4.7 13.6L7.6 20L10 18.9L7.1 12.5H11.8Z" fill="#000" stroke="#fff" stroke-width="1.2" stroke-linejoin="round"/></svg>
<svg width="0" height="0" style="left:0;top:0"><defs><linearGradient id="srvg" x1="0" x2="0" y1="0" y2="1"><stop offset="0" stop-color="#eeeeee"/><stop offset="1" stop-color="#d8c8e0"/></linearGradient></defs></svg>
<svg style="left:10px;top:573px" width="11" height="21" viewBox="0 0 11 21" ><rect x="0.5" y="0.5" width="10" height="20" fill="url(#srvg)" stroke="#000" stroke-width="1"/><path d="M2.5 3H8.5M2.5 4.8H8.5" stroke="#8a8a8a" stroke-width="0.9"/><path d="M2.5 13.5H8.5M2.5 15.5H8.5M2.5 17.5H8.5" stroke="#b0a0b8" stroke-width="0.8"/></svg>
<svg style="left:9px;top:103px" width="16" height="16" viewBox="0 0 16 16" ><rect x="0.9" y="0.9" width="14.2" height="14.2" rx="1.2" fill="#fff" stroke="#7b8b9e" stroke-width="1.8"/><path d="M1 4.5H15" stroke="#7b8b9e" stroke-width="1.2"/><rect x="3.2" y="2.3" width="1" height="1" fill="#7b8b9e"/><rect x="6" y="2.3" width="1" height="1" fill="#7b8b9e"/><rect x="8.8" y="2.3" width="1" height="1" fill="#7b8b9e"/><rect x="11.6" y="2.3" width="1" height="1" fill="#7b8b9e"/></svg>
<svg style="left:384px;top:105px" width="362" height="13" shape-rendering="crispEdges"><defs><pattern id="bp384_105" width="4" height="4" patternUnits="userSpaceOnUse"><rect width="4" height="4" fill="#eaf0f8"/><rect x="0" y="0" width="1" height="1" fill="#6b7ca4"/><rect x="2" y="2" width="1" height="1" fill="#6b7ca4"/><rect x="1" y="1" width="1" height="1" fill="#ffffff"/><rect x="3" y="3" width="1" height="1" fill="#ffffff"/></pattern></defs><rect width="362" height="13" fill="url(#bp384_105)"/></svg>
<svg style="left:751px;top:102px" width="16" height="16" viewBox="0 0 16 16" ><rect x="1.5" y="8.5" width="6" height="6" fill="#eef2fa" stroke="#3e4e76" stroke-width="1"/><rect x="2.5" y="9.5" width="4" height="4" fill="none" stroke="#6878a0" stroke-width="1"/><rect x="4" y="11" width="1" height="1" fill="#fff"/><path d="M14.2 0.6L10 4.8M9.7 1.6V5.1H13.2" fill="none" stroke="#000" stroke-width="1.1"/></svg>
<svg style="left:769px;top:102px" width="16" height="16" viewBox="0 0 16 16" ><rect x="1.5" y="6.5" width="8" height="8" fill="#e4ecf6" stroke="#3e4e76" stroke-width="1"/><rect x="2.5" y="7.5" width="6" height="6" fill="none" stroke="#6878a0" stroke-width="1"/><path d="M14.5 2L10.3 6.2M10 3V6.5H13.5" fill="none" stroke="#000" stroke-width="1.1"/></svg>
<svg style="left:796px;top:104px" width="14" height="14" viewBox="0 0 14 14" ><rect x="0.5" y="0.5" width="13" height="13" fill="#eef2fa" stroke="#3e4e76" stroke-width="1"/><rect x="1.5" y="1.5" width="11" height="11" fill="none" stroke="#6878a0" stroke-width="1"/><path d="M3 3L11 11M11 3L3 11" stroke="#000" stroke-width="1.15"/></svg>

</body></html>
